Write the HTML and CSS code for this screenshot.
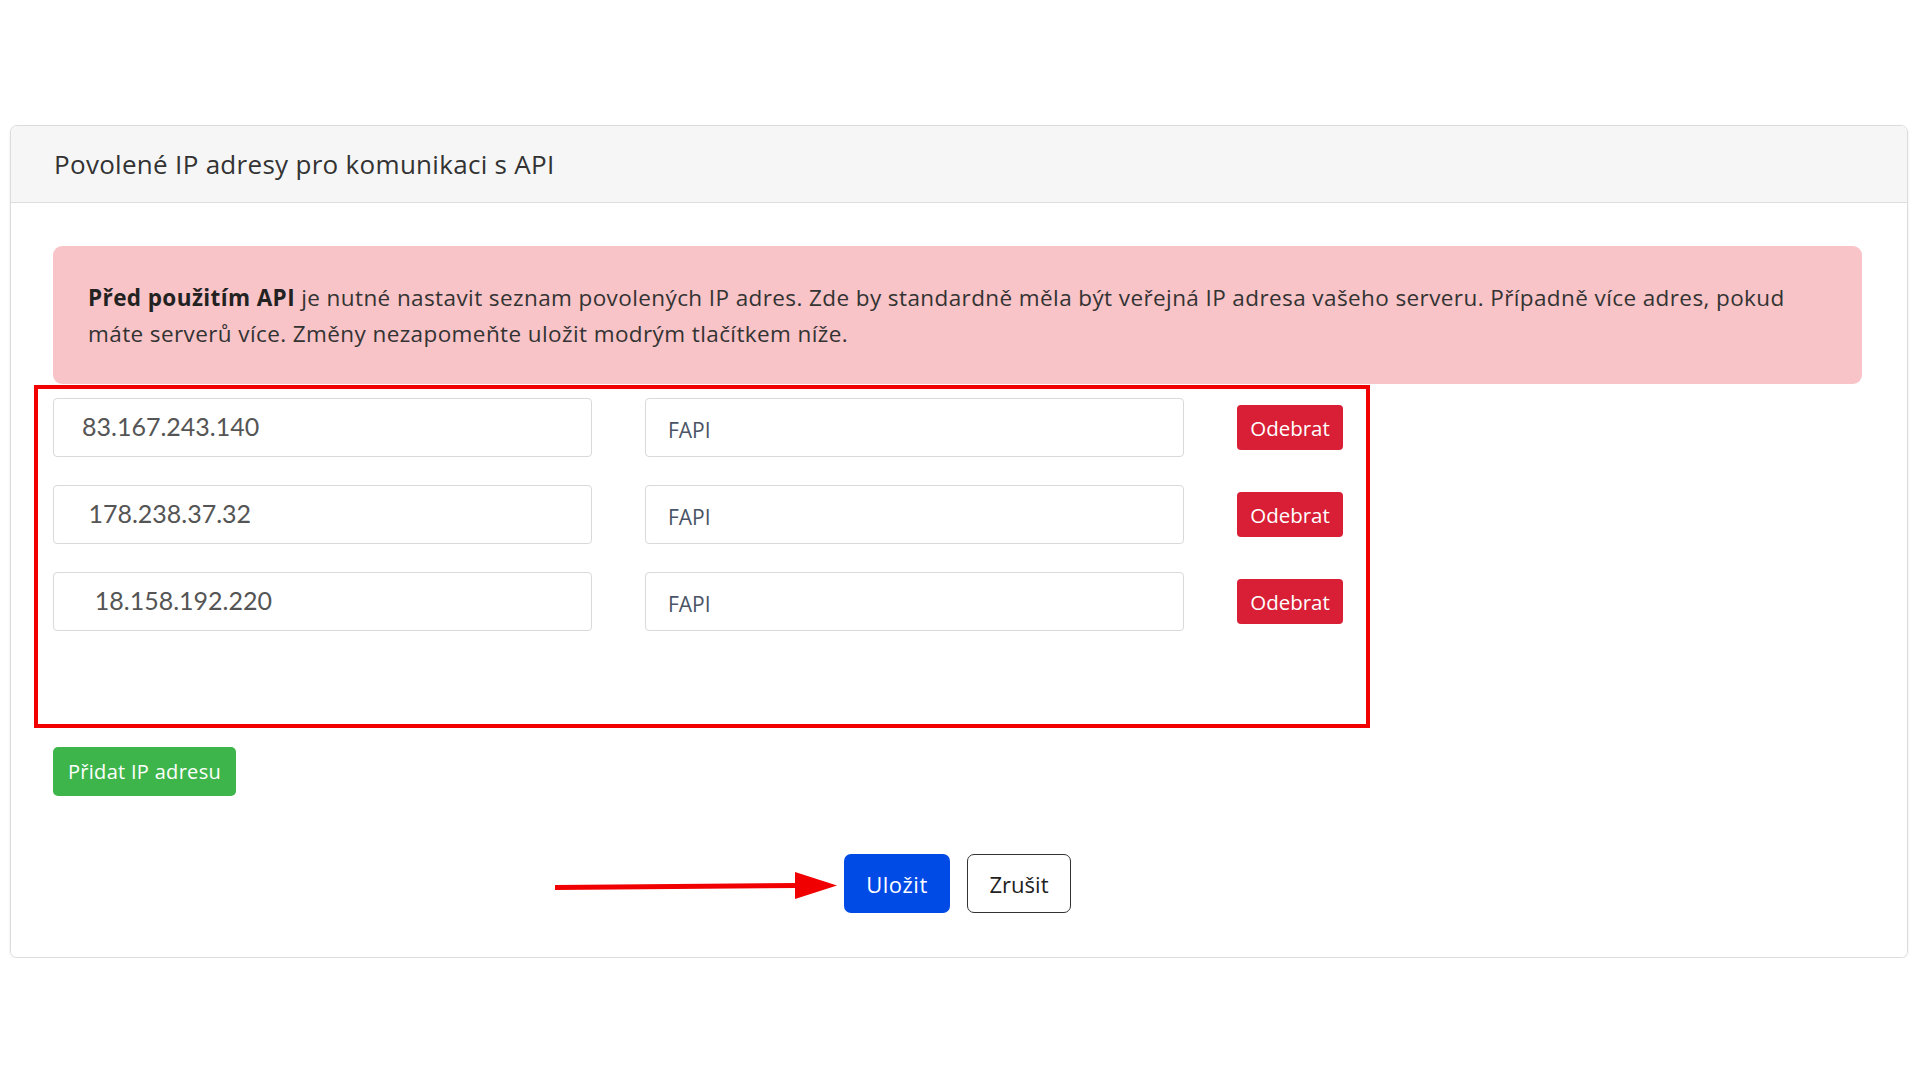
FILE: index.html
```html
<!DOCTYPE html>
<html lang="cs">
<head>
  <meta charset="UTF-8" />
  <meta name="viewport" content="width=device-width, initial-scale=1.0" />
  <title>Povolené IP adresy</title>
  <link rel="stylesheet" href="styles.css">
</head>
<body>
  <div class="page">
    <div class="card">
      <div class="card-header">Povolené IP adresy pro komunikaci s API</div>

      <div class="card-body">
        <div class="alert">
          <b>Před použitím API</b> je nutné nastavit seznam povolených IP adres. Zde by standardně měla být veřejná IP adresa vašeho serveru. Případně více adres, pokud<br>máte serverů více. Změny nezapomeňte uložit modrým tlačítkem níže.
        </div>

        <div class="ip-list">
          <div class="ip-row">
            <input class="ip-input" type="text" value="83.167.243.140" />
            <input class="note-input" type="text" value="FAPI" />
            <button class="btn btn-remove">Odebrat</button>
          </div>
          <div class="ip-row">
            <input class="ip-input" type="text" value=" 178.238.37.32" />
            <input class="note-input" type="text" value="FAPI" />
            <button class="btn btn-remove">Odebrat</button>
          </div>
          <div class="ip-row">
            <input class="ip-input" type="text" value="  18.158.192.220" />
            <input class="note-input" type="text" value="FAPI" />
            <button class="btn btn-remove">Odebrat</button>
          </div>
          <div class="highlight"></div>
        </div>

        <button class="btn btn-add">Přidat IP adresu</button>

        <div class="actions">
          <svg class="arrow" width="282" height="30" viewBox="0 0 282 30">
            <line x1="0" y1="16.5" x2="242" y2="14.5" stroke="#f00000" stroke-width="5" />
            <polygon points="240,1 282,14.5 240,28" fill="#f00000" />
          </svg>
          <button class="btn btn-save">Uložit</button>
          <button class="btn btn-cancel">Zrušit</button>
        </div>
      </div>
    </div>
  </div>
</body>
</html>
```

FILE: styles.css
```css
body {
  margin: 0;
  background: #ffffff;
  font-family: "Open Sans", Lato, sans-serif;
  color: #333333;
}
.page {
  padding: 125px 12px 0 10px;
}
.card {
  border: 1px solid #dcdcdc;
  border-radius: 7px;
  box-shadow: 0 1px 3px rgba(0, 0, 0, 0.08);
  overflow: hidden;
}
.card-header {
  height: 76px;
  display: flex;
  align-items: center;
  padding-left: 43px;
  background-color: #f6f6f6;
  border-bottom: 1px solid #dedede;
  font-size: 26px;
  letter-spacing: 0.3px;
  color: #333333;
}
.card-body {
  padding: 43px 45px 44px 42px;
  background: #ffffff;
}
.alert {
  background-color: #f8c4c7;
  border-radius: 9px;
  padding: 34px 30px 32px 35px;
  font-size: 22.5px;
  letter-spacing: 0.4px;
  line-height: 36px;
  color: #333333;
  white-space: nowrap;
}
.alert b {
  color: #222222;
}
.ip-list {
  position: relative;
  margin-top: 14px;
  padding-bottom: 94px;
  display: flex;
  flex-direction: column;
  gap: 28px;
}
.ip-row {
  display: flex;
  align-items: center;
}
.ip-input, .note-input {
  box-sizing: border-box;
  height: 59px;
  width: 539px;
  border: 1px solid #d9d9d9;
  border-radius: 4px;
  background: #ffffff;
  outline: none;
}
.ip-input {
  padding: 0 0 4px 28px;
  font-family: Lato, "Open Sans", sans-serif;
  font-size: 25px;
  color: #555555;
}
.note-input {
  margin-left: 53px;
  padding: 5px 0 0 22px;
  font-family: "Open Sans", Lato, sans-serif;
  font-size: 21px;
  color: #4a5466;
}
.highlight {
  position: absolute;
  left: -19px;
  top: -13px;
  width: 1336px;
  height: 343px;
  border: 4px solid #f20000;
  box-sizing: border-box;
}
.btn {
  font-family: "Open Sans", Lato, sans-serif;
  border: none;
  cursor: pointer;
}
.btn-remove {
  margin-left: 53px;
  width: 106px;
  height: 45px;
  border-radius: 4px;
  background-color: #d81f36;
  color: #ffffff;
  font-size: 20.5px;
}
.btn-add {
  margin-top: 22px;
  width: 183px;
  height: 49px;
  border-radius: 5px;
  background-color: #3db54a;
  color: #ffffff;
  font-size: 20px;
  letter-spacing: 0.3px;
}
.actions {
  position: relative;
  margin-top: 58px;
  display: flex;
  justify-content: center;
  gap: 17px;
}
.btn-save {
  width: 106px;
  height: 59px;
  border-radius: 7px;
  background-color: #004ae6;
  color: #ffffff;
  font-size: 22px;
  letter-spacing: 0.5px;
}
.btn-cancel {
  width: 104px;
  height: 59px;
  border-radius: 7px;
  background: #ffffff;
  border: 1.5px solid #333333;
  color: #222222;
  font-size: 22px;
}
.arrow {
  position: absolute;
  left: 502px;
  top: 17px;
}
```
